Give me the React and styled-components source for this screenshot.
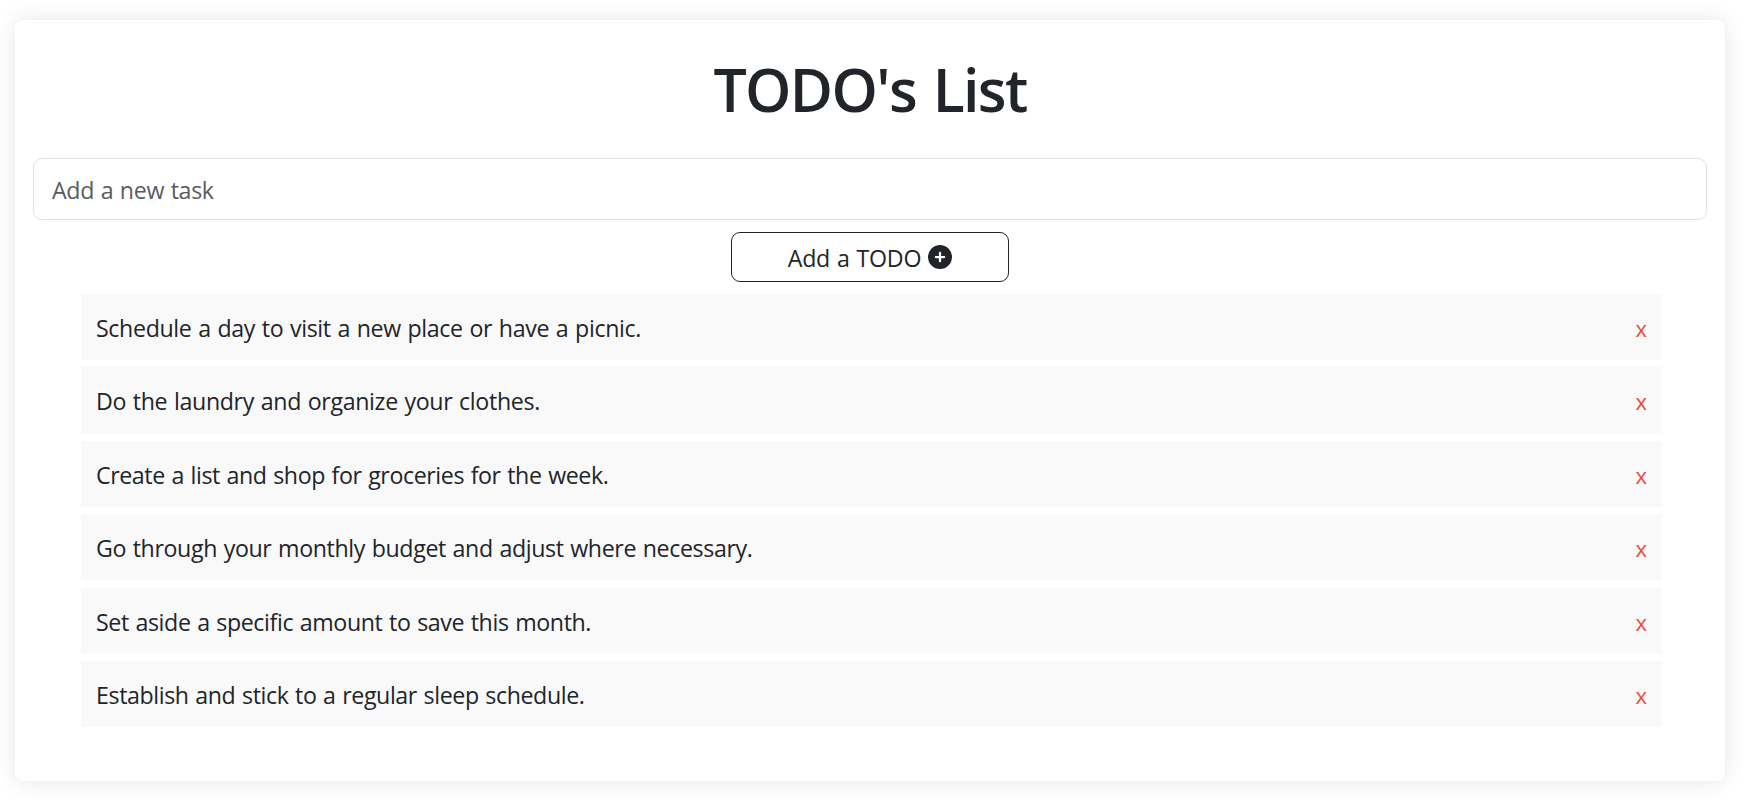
import React, { useState } from "react";
import styled, { createGlobalStyle } from "styled-components";
import { FaCirclePlus } from "react-icons/fa6";

const GlobalStyle = createGlobalStyle`
  *, *::before, *::after { box-sizing: border-box; }
  body {
    margin: 0;
    background: #fff;
    color: #212529;
    font-family: "Open Sans", "Noto Sans", sans-serif;
    font-size: 23.2px;
    line-height: 36px;
    word-spacing: 1px;
  }
`;

const Page = styled.div`
  display: flow-root;
  min-height: 100vh;
`;

const Card = styled.main`
  display: flex;
  flex-direction: column;
  align-items: center;
  height: 761px;
  margin: 20px 20px 0 15px;
  padding: 33px 18px 0;
  background: #fff;
  border-radius: 7.5px;
  box-shadow: 0 0 22px rgba(0, 0, 0, 0.1);
`;

const Title = styled.h1`
  margin: 0 0 33px;
  font-size: 59px;
  font-weight: 600;
  line-height: 72px;
  letter-spacing: -1.65px;
  word-spacing: 3px;
`;

const TaskInput = styled.input`
  width: 100%;
  height: 62px;
  padding: 2px 18px 0;
  border: 1px solid #dee2e6;
  border-radius: 9px;
  background: #fff;
  color: #212529;
  font: inherit;
  letter-spacing: -0.35px;
  word-spacing: 1px;
  outline: none;
  &::placeholder { color: #595c5f; opacity: 1; }
`;

const AddButton = styled.button`
  display: flex;
  align-items: center;
  justify-content: center;
  gap: 7px;
  width: 278px;
  height: 50px;
  margin: 12px 0 11.9px;
  padding: 0;
  border: 1px solid #212529;
  border-radius: 9px;
  background: #fff;
  color: #212529;
  font: inherit;
  word-spacing: 1px;
`;

const ButtonText = styled.span`
  padding-top: 2px;
  letter-spacing: -0.2px;
`;

const List = styled.ul`
  display: flex;
  flex-direction: column;
  gap: 7.5px;
  align-self: stretch;
  margin: 0 45px 0 48px;
  padding: 0;
  list-style: none;
`;

const Item = styled.li`
  display: flex;
  justify-content: space-between;
  align-items: center;
  height: 66px;
  padding: 2px 15px 0;
  background: #f9f9f9;
`;

const Label = styled.span`
  letter-spacing: ${(p) => p.$tracking ?? -0.36}px;
  white-space: nowrap;
`;

const RemoveButton = styled.button`
  padding: 0;
  border: 0;
  background: none;
  color: #e74c3c;
  font: inherit;
  font-size: 22px;
`;

const initialTasks = [
  { text: "Schedule a day to visit a new place or have a picnic.", tracking: -0.35 },
  { text: "Do the laundry and organize your clothes.", tracking: -0.34 },
  { text: "Create a list and shop for groceries for the week.", tracking: -0.41 },
  { text: "Go through your monthly budget and adjust where necessary.", tracking: -0.375 },
  { text: "Set aside a specific amount to save this month.", tracking: -0.39 },
  { text: "Establish and stick to a regular sleep schedule.", tracking: -0.4 },
];

export default function App() {
  const [tasks, setTasks] = useState(initialTasks);
  const [draft, setDraft] = useState("");

  const addTask = () => {
    if (!draft.trim()) return;
    setTasks([...tasks, { text: draft.trim() }]);
    setDraft("");
  };

  return (
    <Page>
      <GlobalStyle />
      <Card>
        <Title>TODO's List</Title>
        <TaskInput placeholder="Add a new task" value={draft} onChange={(e) => setDraft(e.target.value)} />
        <AddButton onClick={addTask}>
          <ButtonText>Add a TODO</ButtonText>
          <FaCirclePlus size={24} />
        </AddButton>
        <List>
          {tasks.map((task) => (
            <Item key={task.text}>
              <Label $tracking={task.tracking}>{task.text}</Label>
              <RemoveButton onClick={() => setTasks(tasks.filter((t) => t !== task))}>x</RemoveButton>
            </Item>
          ))}
        </List>
      </Card>
    </Page>
  );
}
